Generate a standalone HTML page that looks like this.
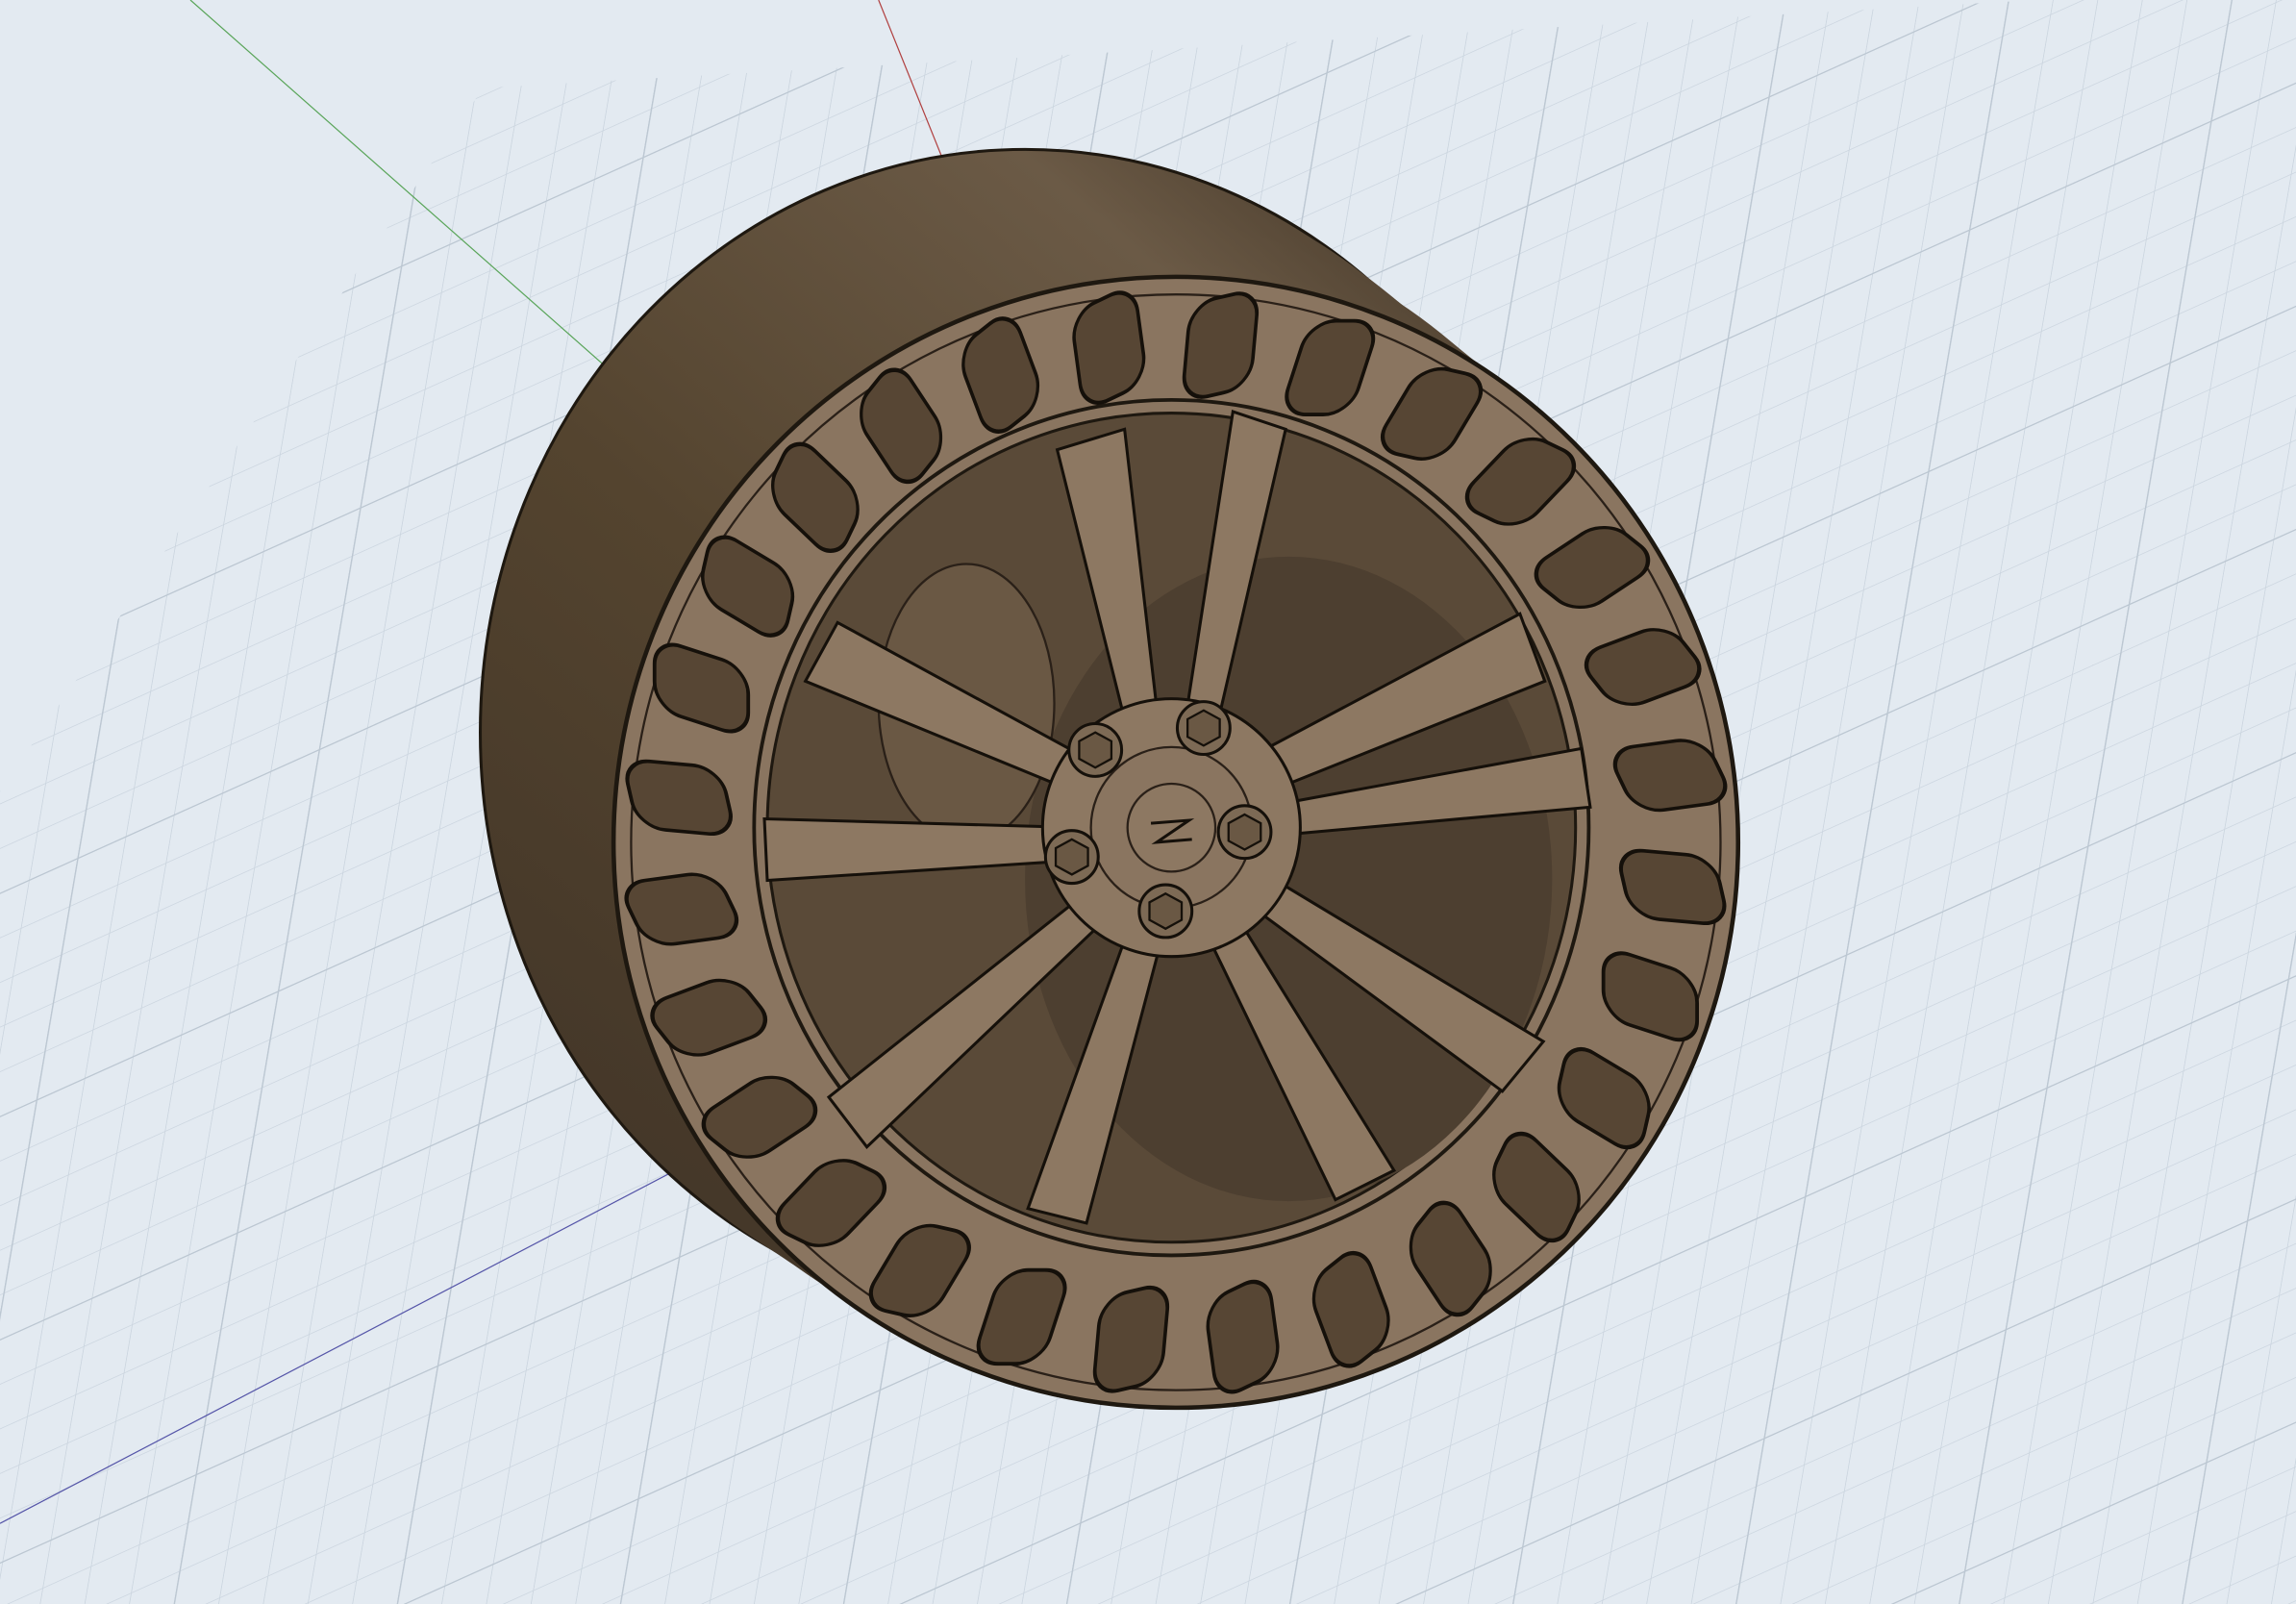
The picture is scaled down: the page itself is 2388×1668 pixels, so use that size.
<!DOCTYPE html>
<html><head><meta charset="utf-8"><style>
html,body{margin:0;padding:0;width:2388px;height:1668px;overflow:hidden;background:#e3eaf1}
svg{display:block}
</style></head><body>
<svg width="2388" height="1668" viewBox="0 0 1568 1095" preserveAspectRatio="none" xmlns="http://www.w3.org/2000/svg">
<defs>
<pattern id="g1" width="33" height="33" patternUnits="userSpaceOnUse" patternTransform="matrix(1,-0.45,-0.17,1,0,0)">
<path d="M0 0H33M0 0V33" stroke="#cbd5df" stroke-width="1.2" fill="none"/>
</pattern>
<pattern id="g2" width="165" height="165" patternUnits="userSpaceOnUse" patternTransform="matrix(1,-0.45,-0.17,1,0,0)">
<path d="M0 0H165M0 0V165" stroke="#bcc7d2" stroke-width="2" fill="none"/>
</pattern>
<clipPath id="gc"><polygon points="330,60 1568,-10 1568,1095 0,1095 0,540"/></clipPath>
<linearGradient id="barrel" x1="0" y1="1" x2="0.8" y2="0">
<stop offset="0" stop-color="#3e3226"/><stop offset="0.5" stop-color="#54442f"/><stop offset="0.85" stop-color="#6b5a46"/><stop offset="1" stop-color="#4a3c2c"/>
</linearGradient>
</defs>
<rect width="1568" height="1095" fill="#e3eaf1"/>
<g clip-path="url(#gc)">
<rect width="1568" height="1095" fill="url(#g1)"/>
<rect width="1568" height="1095" fill="url(#g2)"/>
</g>
<line x1="130" y1="0" x2="640" y2="450" stroke="#5aa55a" stroke-width="0.8"/>
<line x1="600" y1="0" x2="842" y2="600" stroke="#b04040" stroke-width="0.8"/>
<line x1="0" y1="1040" x2="842" y2="600" stroke="#5555a8" stroke-width="0.8"/>
<!-- barrel sweep -->
<g fill="url(#barrel)">
<ellipse cx="700" cy="500" rx="372" ry="398" stroke="#1e1810" stroke-width="2"/>
<ellipse cx="710" cy="507" rx="373" ry="397"/>
<ellipse cx="721" cy="515" rx="374" ry="396"/>
<ellipse cx="731" cy="522" rx="375" ry="394"/>
<ellipse cx="741" cy="530" rx="376" ry="393"/>
<ellipse cx="752" cy="537" rx="378" ry="392"/>
<ellipse cx="762" cy="545" rx="379" ry="391"/>
<ellipse cx="772" cy="552" rx="380" ry="389"/>
<ellipse cx="782" cy="560" rx="381" ry="388"/>
<ellipse cx="793" cy="567" rx="382" ry="387"/>
</g>
<!-- face -->
<ellipse cx="803" cy="575" rx="384" ry="386" fill="#8a7560" stroke="#1e1810" stroke-width="3"/>
<ellipse cx="803" cy="575" rx="372" ry="374" fill="none" stroke="#2a2018" stroke-width="1.5"/>
<g transform="translate(803,575)" fill="#574634" stroke="#15100a" stroke-width="2.5">
<rect x="-24" y="-356" width="48" height="64" rx="18" transform="rotate(0) skewX(-18)"/>
<rect x="-24" y="-356" width="48" height="64" rx="18" transform="rotate(12.86) skewX(-18)"/>
<rect x="-24" y="-356" width="48" height="64" rx="18" transform="rotate(25.71) skewX(-18)"/>
<rect x="-24" y="-356" width="48" height="64" rx="18" transform="rotate(38.57) skewX(-18)"/>
<rect x="-24" y="-356" width="48" height="64" rx="18" transform="rotate(51.43) skewX(-18)"/>
<rect x="-24" y="-356" width="48" height="64" rx="18" transform="rotate(64.29) skewX(-18)"/>
<rect x="-24" y="-356" width="48" height="64" rx="18" transform="rotate(77.14) skewX(-18)"/>
<rect x="-24" y="-356" width="48" height="64" rx="18" transform="rotate(90) skewX(-18)"/>
<rect x="-24" y="-356" width="48" height="64" rx="18" transform="rotate(102.86) skewX(-18)"/>
<rect x="-24" y="-356" width="48" height="64" rx="18" transform="rotate(115.71) skewX(-18)"/>
<rect x="-24" y="-356" width="48" height="64" rx="18" transform="rotate(128.57) skewX(-18)"/>
<rect x="-24" y="-356" width="48" height="64" rx="18" transform="rotate(141.43) skewX(-18)"/>
<rect x="-24" y="-356" width="48" height="64" rx="18" transform="rotate(154.29) skewX(-18)"/>
<rect x="-24" y="-356" width="48" height="64" rx="18" transform="rotate(167.14) skewX(-18)"/>
<rect x="-24" y="-356" width="48" height="64" rx="18" transform="rotate(180) skewX(-18)"/>
<rect x="-24" y="-356" width="48" height="64" rx="18" transform="rotate(192.86) skewX(-18)"/>
<rect x="-24" y="-356" width="48" height="64" rx="18" transform="rotate(205.71) skewX(-18)"/>
<rect x="-24" y="-356" width="48" height="64" rx="18" transform="rotate(218.57) skewX(-18)"/>
<rect x="-24" y="-356" width="48" height="64" rx="18" transform="rotate(231.43) skewX(-18)"/>
<rect x="-24" y="-356" width="48" height="64" rx="18" transform="rotate(244.29) skewX(-18)"/>
<rect x="-24" y="-356" width="48" height="64" rx="18" transform="rotate(257.14) skewX(-18)"/>
<rect x="-24" y="-356" width="48" height="64" rx="18" transform="rotate(270) skewX(-18)"/>
<rect x="-24" y="-356" width="48" height="64" rx="18" transform="rotate(282.86) skewX(-18)"/>
<rect x="-24" y="-356" width="48" height="64" rx="18" transform="rotate(295.71) skewX(-18)"/>
<rect x="-24" y="-356" width="48" height="64" rx="18" transform="rotate(308.57) skewX(-18)"/>
<rect x="-24" y="-356" width="48" height="64" rx="18" transform="rotate(321.43) skewX(-18)"/>
<rect x="-24" y="-356" width="48" height="64" rx="18" transform="rotate(334.29) skewX(-18)"/>
<rect x="-24" y="-356" width="48" height="64" rx="18" transform="rotate(347.14) skewX(-18)"/>
</g>
<!-- inner opening -->
<ellipse cx="800" cy="565" rx="285" ry="292" fill="#8a7560" stroke="#1e1810" stroke-width="2.5"/>
<ellipse cx="800" cy="565" rx="276" ry="283" fill="#5a4a38" stroke="#1e1810" stroke-width="2"/>
<ellipse cx="880" cy="600" rx="180" ry="220" fill="#4d3f30"/>
<ellipse cx="660" cy="480" rx="60" ry="95" fill="#6a5844" stroke="#2a2018" stroke-width="1.5"/>
<!-- spokes -->
<g stroke="#15100a" stroke-width="2" fill="#8d7862" transform="translate(800,565)">
<polygon points="-28,-58 -8,-64 -32,-272 -78,-258"/>
<polygon points="8,-64 28,-56 78,-272 42,-284"/>
<polygon points="46,-44 60,-22 255,-100 238,-146"/>
<polygon points="62,-14 64,6 286,-14 280,-54"/>
<polygon points="58,28 44,46 226,180 254,146"/>
<polygon points="38,50 18,60 112,254 152,234"/>
<polygon points="-4,66 -26,60 -98,260 -58,270"/>
<polygon points="-36,54 -50,38 -234,184 -208,218"/>
<polygon points="-60,22 -62,0 -278,-6 -276,36"/>
<polygon points="-60,-22 -48,-42 -228,-140 -250,-100"/>
</g>
<!-- hub -->
<circle cx="800" cy="565" r="88" fill="#8d7862" stroke="#15100a" stroke-width="2"/>
<circle cx="800" cy="565" r="55" fill="#8a7560" stroke="#2a2018" stroke-width="1.5"/>
<circle cx="800" cy="565" r="30" fill="#8d7862" stroke="#2a2018" stroke-width="1.5"/>
<g fill="#7d6a55" stroke="#15100a" stroke-width="2">
<circle cx="748" cy="512" r="18"/><circle cx="822" cy="497" r="18"/>
<circle cx="850" cy="568" r="18"/><circle cx="796" cy="622" r="18"/><circle cx="732" cy="585" r="18"/>
</g>
<g fill="#6a5844" stroke="#15100a" stroke-width="1.5">
<polygon points="748,500 759,506 759,518 748,524 737,518 737,506"/>
<polygon points="822,485 833,491 833,503 822,509 811,503 811,491"/>
<polygon points="850,556 861,562 861,574 850,580 839,574 839,562"/>
<polygon points="796,610 807,616 807,628 796,634 785,628 785,616"/>
<polygon points="732,573 743,579 743,591 732,597 721,591 721,579"/>
</g>
<path d="M786 562 L812 560 L790 575 L814 573" stroke="#15100a" stroke-width="2" fill="none"/>
</svg>
</body></html>
